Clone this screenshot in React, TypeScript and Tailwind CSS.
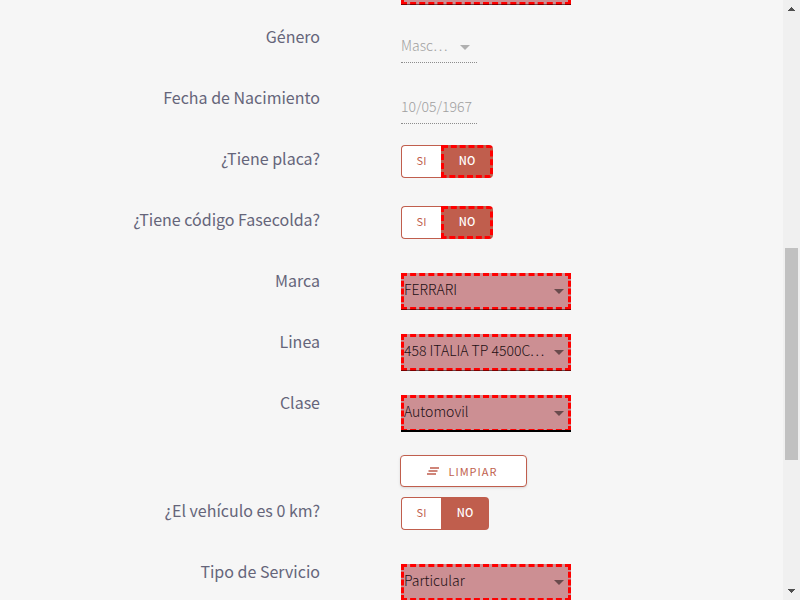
import React from "react";

const fieldText =
  "font-['Noto_Sans_CJK_SC','Noto_Sans',sans-serif] text-[14px] leading-5 font-light [font-feature-settings:'pwid']";

function Row({ label, htmlFor, id, children }: { label: string; htmlFor?: string; id?: string; children: React.ReactNode }) {
  return (
    <div className="grid h-[61px] shrink-0 grid-cols-[320fr_382fr] gap-x-[81px]">
      <label id={id} htmlFor={htmlFor} className="pt-[7px] text-right text-[16px] leading-6 whitespace-nowrap text-[#65657a]">
        {label}
      </label>
      <div>{children}</div>
    </div>
  );
}

function Caret({ className }: { className: string }) {
  return (
    <svg viewBox="0 0 10 5" className={`pointer-events-none absolute h-[5px] w-[10px] ${className}`} aria-hidden="true">
      <path d="M0 0h10L5 5z" fill="currentColor" />
    </svg>
  );
}

function RequiredSelect({ id, label, value, focused = false }: { id: string; label: string; value: string; focused?: boolean }) {
  return (
    <Row label={label} htmlFor={id}>
      <div className="pt-3">
        <div className="relative w-[170px]">
          <select
            id={id}
            defaultValue={value}
            className={`${fieldText} block h-[37px] w-full appearance-none truncate border-3 border-dashed border-[#ff0000] bg-[#cc8f93] pr-5 pb-[5px] text-[#1c1014] outline-none`}
          >
            <option>{value}</option>
          </select>
          <Caret className="top-4 right-[7px] text-[#694b4d]" />
          <span className={`pointer-events-none absolute inset-x-0 bottom-0 ${focused ? "h-[2px] bg-black" : "h-px bg-black/50"}`} />
        </div>
      </div>
    </Row>
  );
}

function Toggle({ id, label, outlined = false }: { id: string; label: string; outlined?: boolean }) {
  return (
    <Row label={label} id={id}>
      <div role="group" aria-labelledby={id} className="flex pt-[6px] text-[11px] leading-4">
        <button type="button" className="h-[33px] w-10 rounded-l border border-r-0 border-[#c05e4d] bg-white pb-[3px] text-[#c05e4d]">
          SI
        </button>
        <button
          type="button"
          aria-pressed="true"
          className={`h-[33px] rounded-r bg-[#c05e4d] pb-[3px] font-medium text-white ${outlined ? "w-[52px] border-3 border-dashed border-[#ff0000]" : "w-12"}`}
        >
          NO
        </button>
      </div>
    </Row>
  );
}

function Scrollbar() {
  return (
    <div aria-hidden="true" className="flex w-[17px] shrink-0 flex-col items-center bg-[#f0f0f0] py-[7px] text-[#505050]">
      <svg viewBox="0 0 7 4" className="h-1 w-[7px]" shapeRendering="crispEdges">
        <path d="M3 0h1v1h1v1h1v1h1v1H0V3h1V2h1V1h1z" fill="currentColor" />
      </svg>
      <div className="grow-[237]" />
      <div className="w-[13px] grow-[212] bg-[#c1c1c1]" />
      <div className="grow-[129]" />
      <svg viewBox="0 0 7 4" className="h-1 w-[7px]" shapeRendering="crispEdges">
        <path d="M0 0h7v1H6v1H5v1H4v1H3V3H2V2H1V1H0z" fill="currentColor" />
      </svg>
    </div>
  );
}

export default function App() {
  return (
    <div className="flex h-screen overflow-hidden bg-[#f6f6f6] font-['Noto_Sans_CJK_SC','Noto_Sans',sans-serif]">
      <form className="-mt-11 flex min-w-0 grow flex-col">
        <RequiredSelect id="documento" label="" value="" />
        <Row label="Género" htmlFor="genero">
          <div className="relative w-[76px] pt-4">
            <select
              id="genero"
              disabled
              defaultValue="Masculino"
              className={`${fieldText} block h-[30px] w-full appearance-none truncate border-b border-dotted border-[#8c8c8c] pr-[29px] pb-[5px] text-[#a0a0a0] opacity-100`}
            >
              <option>Masculino</option>
            </select>
            <Caret className="top-7 right-[7px] text-[#b0b0b0]" />
          </div>
        </Row>
        <Row label="Fecha de Nacimiento" htmlFor="nacimiento">
          <div className="pt-4">
            <input
              id="nacimiento"
              disabled
              defaultValue="10/05/1967"
              className={`${fieldText} block h-[30px] w-[76px] border-b border-dotted border-[#8c8c8c] pb-[5px] text-[#a0a0a0]`}
            />
          </div>
        </Row>
        <Toggle id="placa" label="¿Tiene placa?" outlined />
        <Toggle id="fasecolda" label="¿Tiene código Fasecolda?" outlined />
        <RequiredSelect id="marca" label="Marca" value="FERRARI" />
        <RequiredSelect id="linea" label="Linea" value="458 ITALIA TP 4500CC COUPE" />
        <RequiredSelect id="clase" label="Clase" value="Automovil" focused />
        <div className="grid h-[47px] shrink-0 grid-cols-[320fr_382fr] gap-x-20 pt-[11px]">
          <button
            type="button"
            className="col-start-2 flex h-8 w-[127px] items-center gap-[9px] rounded border border-[#c05e4d] bg-white pb-px pl-[26px] text-[11px] leading-4 tracking-[1px] text-[#c05e4d] shadow-sm"
          >
            <svg viewBox="0 0 12 8" className="h-2 w-3" aria-hidden="true">
              <path d="M3 1h9M1.500 4h9M0 7h9" stroke="currentColor" strokeWidth="1.300" />
            </svg>
            LIMPIAR
          </button>
        </div>
        <Toggle id="cero-km" label="¿El vehículo es 0 km?" />
        <RequiredSelect id="servicio" label="Tipo de Servicio" value="Particular" />
      </form>
      <Scrollbar />
    </div>
  );
}
